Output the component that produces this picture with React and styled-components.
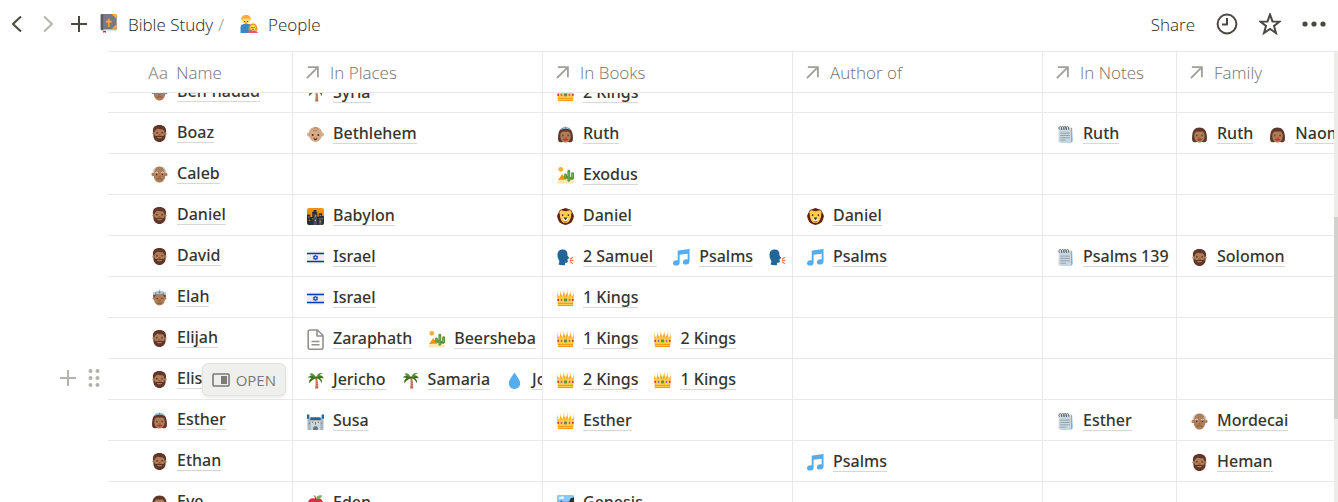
import React, { useLayoutEffect, useRef } from "react";
import styled, { createGlobalStyle, css } from "styled-components";

const HAIR = "#60352a";
const SKIN = "#af7e57";

const Woman = ({ tiara }) => (
  <>
    <path
      fill={HAIR}
      d="M18 3C9 3 4 9 3 17c-1 6-1 12 0 15 2 3 6 3 9 2h12c3 1 7 1 9-2 1-3 1-9 0-15C32 9 27 3 18 3z"
    />
    <path
      fill={SKIN}
      d="M18 12c-3 0-5-1-7 0-3 2-4 5-4 9 0 8 5 14 11 14s11-6 11-14c0-4-1-7-4-9-2-1-4 0-7 0z"
    />
    <ellipse cx="12.500" cy="20" rx="1.500" ry="2" fill={HAIR} />
    <ellipse cx="23.500" cy="20" rx="1.500" ry="2" fill={HAIR} />
    <path d="M16 24.500h4" stroke="#84502f" strokeWidth="1.500" />
    <path fill="#ee1c30" d="M12 28l4.500-1.500 1.500.6 1.500-.6L24 28c-1 4-11 4-12 0z" />
    {tiara && (
      <>
        <path
          fill="#aebcc6"
          d="M8 8l1-5 3 2 1-4 3 2 2-3 2 3 3-2 1 4 3-2 1 5c-6-3-14-3-20 0z"
        />
        <circle cx="18" cy="4" r="1.700" fill="#4289c1" />
        <circle cx="12" cy="5" r="1.200" fill="#4289c1" />
        <circle cx="24" cy="5" r="1.200" fill="#4289c1" />
      </>
    )}
  </>
);

const drawings = {
  beard: (
    <>
      <path
        fill={HAIR}
        d="M18 0C8 0 4 5 4 12c0 4 1 7 1 10 0 8 6 14 13 14s13-6 13-14c0-3 1-6 1-10C32 5 27 0 18 0z"
      />
      <circle cx="5.500" cy="18" r="2.500" fill={SKIN} />
      <circle cx="30.500" cy="18" r="2.500" fill={SKIN} />
      <path
        fill={SKIN}
        d="M8 13c2-4 5-5 8-5 4 2 8 0 10 2 2 3 3 6 2 12-3 2-5 1-10 1s-7 1-10-1c-1-4-1-7 0-9z"
      />
      <ellipse cx="12.500" cy="16.500" rx="1.700" ry="2" fill={HAIR} />
      <ellipse cx="23.500" cy="16.500" rx="1.700" ry="2" fill={HAIR} />
      <path d="M16 20.500h4" stroke="#84502f" strokeWidth="1.800" />
      <path fill={SKIN} d="M12 26c3-1 9-1 12 0-2 3-10 3-12 0z" />
    </>
  ),
  elder: (
    <>
      <path fill="#c8ccd0" d="M4 17C1 8 8 1 18 1s17 7 14 16l-3 2H7z" />
      <path
        fill={SKIN}
        d="M18 1c7 0 11 6 11 14l1 6c0 7-5 14-12 14S6 28 6 21l1-6C7 7 11 1 18 1z"
      />
      <circle cx="4.500" cy="18" r="3.500" fill={SKIN} />
      <circle cx="31.500" cy="18" r="3.500" fill={SKIN} />
      <path
        d="M9 14.500c2-2 4-2 6 0M21 14.500c2-2 4-2 6 0"
        fill="none"
        stroke="#dfe1e2"
        strokeWidth="2"
      />
      <circle cx="12" cy="18" r="1.600" fill={HAIR} />
      <circle cx="24" cy="18" r="1.600" fill={HAIR} />
      <path
        d="M16 23h4M12 28c4-1 8-1 12 0"
        fill="none"
        stroke="#7c4b2d"
        strokeWidth="1.600"
      />
    </>
  ),
  prince: (
    <>
      <path fill={HAIR} d="M5 18C3 9 8 6 18 6s15 3 13 12l-3 2H8z" />
      <ellipse cx="18" cy="22" rx="11.500" ry="13" fill={SKIN} />
      <circle cx="6" cy="20" r="2.500" fill={SKIN} />
      <circle cx="30" cy="20" r="2.500" fill={SKIN} />
      <path
        fill="#b6c5ce"
        d="M5 13l-1-7 5 2 2-5 4 2 3-5 3 5 4-2 2 5 5-2-1 7c-8-3-18-3-26 0z"
      />
      <circle cx="18" cy="7" r="2.200" fill="#4289c1" />
      <circle cx="10" cy="9" r="1.500" fill="#4289c1" />
      <circle cx="26" cy="9" r="1.500" fill="#4289c1" />
      <circle cx="13" cy="20" r="1.600" fill={HAIR} />
      <circle cx="23" cy="20" r="1.600" fill={HAIR} />
      <path d="M16 25h4M13 30h10" stroke="#7c4b2d" strokeWidth="1.600" />
    </>
  ),
  princess: <Woman tiara />,
  woman: <Woman />,
  baby: (
    <>
      <path
        fill="#d4ab88"
        d="M18 2c8 0 13 5 14 12 2 0 4 2 4 4s-2 5-5 5c-2 7-7 11-13 11S7 30 5 23c-3 0-5-3-5-5s2-4 4-4C5 7 10 2 18 2z"
      />
      <path
        d="M12 8c4 4 11 2 10-2-1-4-8-3-6 0"
        fill="none"
        stroke="#a57853"
        strokeWidth="1.700"
      />
      <circle cx="12" cy="19" r="2" fill="#662113" />
      <circle cx="24" cy="19" r="2" fill="#662113" />
      <path fill="#662113" d="M14 25h8c0 7-8 7-8 0z" />
      <path fill="#fff" d="M16 25h4v1.600h-4z" />
    </>
  ),
  palm: (
    <>
      <path
        fill="#c1694f"
        d="M17 12l4-1c2 8 3 16 3 24h-7c2-8 2-16 0-23z"
      />
      <path
        d="M18 19h4M18 24h5M18 29h5"
        stroke="#e0997f"
        strokeWidth="1.500"
      />
      <path
        fill="#3e721d"
        d="M18 10C14 5 6 6 1 13c5-2 7-1 8 0-4 2-5 6-4 11 5-7 9-9 14-11 6 1 10 4 12 11 2-5 0-9-3-11 3-1 5 0 8 1-3-7-10-9-14-5z"
      />
      <path
        fill="#5c913b"
        d="M19 11C14 3 10 1 5 4c3 1 5 3 6 5zM20 11c1-7 7-11 13-8-5 1-6 3-7 7z"
      />
    </>
  ),
  city: (
    <>
      <rect width="36" height="36" rx="4" fill="#f4900c" />
      <path
        fill="#292f33"
        d="M0 14h7v5h4V8h3V4h6v5h2v9h3v-7h7v6h4v15c0 2-2 4-4 4H4c-2 0-4-2-4-4z"
      />
      <path fill="#4b545d" d="M14 13h7v23h-7zM25 20h6v16h-6z" />
      <path
        fill="#ffcc4d"
        d="M3 18h2v2H3zM4 25h2v2H4zM11 22h2v2h-2zM17 16h2v2h-2zM17 25h2v2h-2zM27 15h2v2h-2zM32 22h2v2h-2zM27 28h2v2h-2z"
      />
    </>
  ),
  israel: (
    <>
      <rect y="5" width="36" height="26" rx="4" fill="#eee" />
      <path fill="#0038b8" d="M0 8h36v3H0zM0 25h36v3H0z" />
      <path
        d="M18 12.500l4.800 8.200h-9.600zM18 23.500l4.800-8.200h-9.600z"
        fill="none"
        stroke="#0038b8"
        strokeWidth="1.600"
      />
    </>
  ),
  drop: (
    <path fill="#55acee" d="M18 1c4 7 12 15 12 23 0 7-5 12-12 12S6 31 6 24C6 16 14 8 18 1z" />
  ),
  castle: (
    <>
      <path fill="#aab8c2" d="M1 11h34v25H1z" />
      <path fill="#ccd6dd" d="M8 17h20v19H8z" />
      <path
        fill="#226699"
        d="M0 3h5v9H0zM31 3h5v9h-5zM7 9h22v6H7z"
      />
      <path fill="#66757f" d="M17 19h2v6h-2zM13 36v-4c0-5 10-5 10 0v4z" />
      <path fill="#67757f" d="M11 18h2v3h-2zM23 18h2v3h-2zM4 20h2v3H4zM30 20h2v3h-2z" />
    </>
  ),
  apple: (
    <>
      <path
        fill="#dd2e44"
        d="M24 7c-3 0-4 1-6 1s-3-1-6-1C6 7 2 12 2 19c0 9 6 17 11 17 2 0 3-1 5-1s3 1 5 1c5 0 11-8 11-17 0-7-4-12-10-12z"
      />
      <path d="M18 9c0-4-1-6-3-8" stroke="#662113" strokeWidth="2" fill="none" />
      <path fill="#77b255" d="M19 7c2-6 7-7 13-6-2 6-7 8-13 6z" />
    </>
  ),
  crown: (
    <>
      <path
        fill="#ffac33"
        d="M2 34L0 6l5 10 2-12 5 11 2-13 4 11 4-11 2 13 5-11 2 12 5-10-2 28z"
      />
      <path fill="#ffcc4d" d="M3 17l3-6 3 6 3-7 4 7 2-9 2 9 4-7 3 7 3-6 3 6v16H3z" />
      <path d="M2 28.500h32M2 33h32" stroke="#f4900c" strokeWidth="1.800" />
      <path fill="#5c913b" d="M15 18h6v6h-6z" />
      <path fill="#9266cc" d="M9.500 18l2.500 3-2.500 3L7 21zM26.500 18l2.500 3-2.500 3-2.500-3z" />
      <path fill="#be1931" d="M1 19h3v4H1zM32 19h3v4h-3z" />
      <g fill="#ffe39a">
        <circle cx="1.500" cy="4" r="1.500" />
        <circle cx="7.500" cy="3" r="1.500" />
        <circle cx="14" cy="2" r="1.500" />
        <circle cx="22" cy="2" r="1.500" />
        <circle cx="28.500" cy="3" r="1.500" />
        <circle cx="34.500" cy="4" r="1.500" />
      </g>
    </>
  ),
  desert: (
    <>
      <circle cx="8" cy="5" r="5" fill="#ffac33" />
      <path fill="#f4900c" d="M2 28l9-13 10 13z" />
      <path fill="#ffe8b6" d="M0 31c3-5 10-4 18-4 10 0 16 0 18 4 1 4-3 4-7 4H4c-3 0-5-1-4-4z" />
      <path
        d="M25 28V9M25 22h-7v-5M25 24h8V14"
        fill="none"
        stroke="#5c913b"
        strokeWidth="6"
        strokeLinecap="round"
        strokeLinejoin="round"
      />
      <path d="M25 28V10M18 17v5M33 15v8" stroke="#77b255" strokeWidth="2" />
    </>
  ),
  lion: (
    <>
      <path
        fill="#662113"
        d="M18 0l6 2 6 2 3 6 3 7-2 7-3 6-6 4-7 2-7-2-6-4-3-6-2-7 3-7 3-6 6-2z"
      />
      <path
        fill="#ffcc4d"
        d="M9 5c4 0 5 2 9 2s5-2 9-2c4 1 5 5 3 8 0 9-4 19-12 19S6 22 6 13C4 10 5 6 9 5z"
      />
      <path fill="#ffe8b6" d="M12 22l6-4 6 4c1 10-13 10-12 0z" />
      <path fill="#292f33" d="M14 20h8l-3 5h-2z" />
      <circle cx="12" cy="15" r="1.800" fill="#292f33" />
      <circle cx="24" cy="15" r="1.800" fill="#292f33" />
      <path d="M14 28c2 2 6 2 8 0" stroke="#662113" strokeWidth="1.600" fill="none" />
    </>
  ),
  speaking: (
    <>
      <path
        fill="#226699"
        d="M12 1C4 1 1 6 1 13c0 6 3 9 4 13 0 3-1 5-2 7 5 2 10 2 14 1v-5c3 1 6 0 6-3l-1-4 4-3-4-5C23 6 20 1 12 1z"
      />
      <path
        d="M28 21l5-3M28 24h6M28 27l5 4"
        stroke="#f4794f"
        strokeWidth="2.400"
        strokeLinecap="round"
      />
    </>
  ),
  music: (
    <path
      fill="#55acee"
      d="M34 0L12 3c-1 0-2 1-2 2v19c-6-1-10 2-10 6s3 5 7 5 7-2 7-6V12l17-2v12c-6-1-10 2-10 6s3 5 7 5 7-3 7-6V1c0-1 0-1-1-1z"
    />
  ),
  note: (
    <>
      <path fill="#5dadec" d="M28 4h4l1 28c0 2-2 3-4 3H8z" />
      <path fill="#ccd6dd" d="M4 3h26v29c0 2-1 3-3 3H6c-2 0-3-1-3-3z" />
      <path d="M7 15h20M7 20h20M7 25h20M7 30h12" stroke="#8899a6" strokeWidth="1.800" />
      <path
        d="M5 8c-3-6 2-9 4-6l1 6c-2-6 2-9 4-6l1 6c-2-6 2-9 4-6l1 6c-2-6 2-9 4-6l1 6"
        fill="none"
        stroke="#4f5b64"
        strokeWidth="1.800"
      />
    </>
  ),
  park: (
    <>
      <rect width="36" height="36" rx="4" fill="#55acee" />
      <path fill="#88c9f9" d="M0 4c0-3 2-4 4-4h28c2 0 4 1 4 4v10H0z" />
      <path fill="#fff" d="M4 8c-1-4 3-5 4-3 2-5 8-2 7 3z" />
      <path fill="#292f33" d="M36 5v27c0 2-2 4-4 4H12l7-18 7-5 3-6z" />
      <path fill="#3e721d" d="M0 20l5-3 4-6 5 8 4 3-6 14H4c-2 0-4-2-4-4z" />
      <path fill="#66757f" d="M21 20l7-7 1 4-6 8z" />
    </>
  ),
  bible: (
    <>
      <path fill="#be1931" d="M8 30h5v6l-3-2-2 2z" />
      <path fill="#5c5b66" d="M6 0h24c2 0 3 1 3 3v28H6c-2 0-3-1-3-3V3c0-2 1-3 3-3z" />
      <path fill="#777987" d="M8 0h22c2 0 3 1 3 3v25H8z" />
      <path fill="#e1e8ed" d="M8 29h24v3H8z" />
      <path fill="#ffac33" d="M24 0h6c2 0 3 1 3 3v6zM33 20v8h-9z" />
      <path fill="#ffac33" d="M17 9h3v4h4v3h-4v8h-3v-8h-4v-3h4z" />
    </>
  ),
  family: (
    <>
      <path fill="#3b88c3" d="M1 36V25c0-5 3-7 8-7h7c5 0 8 2 8 7v11z" />
      <circle cx="12" cy="10" r="8" fill="#ffdc5d" />
      <path fill="#ffac33" d="M3 11C1 4 6 0 12 0c7 0 11 4 9 11-2-2-2-5-6-5-3 2-7 1-9 1z" />
      <path fill="#f4900c" d="M17 31c0-9 3-14 9-14s9 5 9 14z" />
      <circle cx="26" cy="25" r="5.500" fill="#ffdc5d" />
      <path fill="#ea596e" d="M16 36c1-4 5-5 10-5s9 1 10 5z" />
      <path d="M9 12v2M15 12v2M24 24v2M28 24v2" stroke="#662113" strokeWidth="1.800" />
      <path d="M10 16h4M24 28.500h4" stroke="#df1f32" strokeWidth="1.500" />
    </>
  ),
};

const Emoji = ({ name, size = 17 }) => (
  <EmojiSvg viewBox="0 0 36 36" width={size} height={size} aria-hidden="true">
    {drawings[name]}
  </EmojiSvg>
);

const BlankPage = () => (
  <EmojiSvg viewBox="0 0 17 21" width="17" height="21" aria-hidden="true">
    <path
      d="M3 1h7.500L16 6.500V18.500c0 1-.7 1.700-1.700 1.700H3c-1 0-1.800-.7-1.800-1.700V2.800C1.200 1.700 2 1 3 1zM10 1v6h6M4.500 12.500h8M4.500 15.800h8"
      fill="none"
      stroke="#91918e"
      strokeWidth="1.600"
      strokeLinejoin="round"
    />
  </EmojiSvg>
);

const columns = [
  { label: "Name", width: 185 },
  { label: "In Places", width: 250 },
  { label: "In Books", width: 250 },
  { label: "Author of", width: 250 },
  { label: "In Notes", width: 134 },
  { label: "Family" },
];

// name, then places / books / author / notes / family
const people = [
  { name: "Ben-hadad", icon: "elder", links: [[["palm", "Syria"]], [["crown", "2 Kings"]], [], [], []] },
  {
    name: "Boaz",
    icon: "beard",
    links: [
      [["baby", "Bethlehem"]],
      [["princess", "Ruth"]],
      [],
      [["note", "Ruth"]],
      [["woman", "Ruth"], ["woman", "Naomi"]],
    ],
  },
  { name: "Caleb", icon: "elder", links: [[], [["desert", "Exodus"]], [], [], []] },
  {
    name: "Daniel",
    icon: "beard",
    links: [[["city", "Babylon"]], [["lion", "Daniel"]], [["lion", "Daniel"]], [], []],
  },
  {
    name: "David",
    icon: "beard",
    links: [
      [["israel", "Israel"]],
      [["speaking", "2 Samuel\u00a0"], ["music", "Psalms"], ["speaking", "1 Samuel"]],
      [["music", "Psalms"]],
      [["note", "Psalms 139"]],
      [["beard", "Solomon"]],
    ],
  },
  { name: "Elah", icon: "prince", links: [[["israel", "Israel"]], [["crown", "1 Kings"]], [], [], []] },
  {
    name: "Elijah",
    icon: "beard",
    links: [
      [["page", "Zaraphath"], ["desert", "Beersheba"]],
      [["crown", "1 Kings"], ["crown", "2 Kings"]],
      [],
      [],
      [],
    ],
  },
  {
    name: "Elisha",
    icon: "beard",
    hovered: true,
    links: [
      [["palm", "Jericho"], ["palm", "Samaria"], ["drop", "Jordan"]],
      [["crown", "2 Kings"], ["crown", "1 Kings"]],
      [],
      [],
      [],
    ],
  },
  {
    name: "Esther",
    icon: "princess",
    links: [
      [["castle", "Susa"]],
      [["crown", "Esther"]],
      [],
      [["note", "Esther"]],
      [["elder", "Mordecai"]],
    ],
  },
  { name: "Ethan", icon: "beard", links: [[], [], [["music", "Psalms"]], [], [["beard", "Heman"]]] },
  { name: "Eve", icon: "woman", links: [[["apple", "Eden"]], [["park", "Genesis"]], [], [], []] },
];

export default function App() {
  const scroller = useRef(null);

  useLayoutEffect(() => {
    scroller.current.scrollTop = 21;
  }, []);

  return (
    <Page>
      <GlobalStyle />
      <Toolbar>
        <NavButtons>
          <IconButton aria-label="Back">
            <svg width="12" height="18" viewBox="0 0 12 18">
              <path d="M10 1.500L2 9l8 7.500" />
            </svg>
          </IconButton>
          <IconButton aria-label="Forward" $muted>
            <svg width="12" height="18" viewBox="0 0 12 18">
              <path d="M2 1.500L10 9l-8 7.500" />
            </svg>
          </IconButton>
          <IconButton aria-label="New page">
            <svg width="18" height="18" viewBox="0 0 18 18">
              <path d="M9 1v16M1 9h16" />
            </svg>
          </IconButton>
        </NavButtons>
        <Breadcrumb>
          <Crumb href="#bible-study">
            <Emoji name="bible" size={19} />
            <span>Bible Study</span>
          </Crumb>
          <Slash>/</Slash>
          <Crumb href="#people">
            <Emoji name="family" size={18} />
            <span>People</span>
          </Crumb>
        </Breadcrumb>
        <Actions>
          <ShareButton>Share</ShareButton>
          <IconButton aria-label="Updates">
            <svg width="22" height="22" viewBox="0 0 22 22">
              <circle cx="11" cy="11" r="9.400" />
              <path d="M11 5v6.500H6" />
            </svg>
          </IconButton>
          <IconButton aria-label="Favorite">
            <svg width="22" height="22" viewBox="0 0 22 22">
              <path
                strokeLinejoin="miter"
                d="M11 1.500l2.500 6.900 7.200.2-5.700 4.400 2 7-6-4.100L5 20l2-7-5.700-4.400 7.200-.2z"
              />
            </svg>
          </IconButton>
          <IconButton aria-label="More" $filled>
            <svg width="24" height="22" viewBox="0 0 24 22">
              <circle cx="3" cy="11" r="2.600" />
              <circle cx="12" cy="11" r="2.600" />
              <circle cx="21" cy="11" r="2.600" />
            </svg>
          </IconButton>
        </Actions>
      </Toolbar>

      <Main>
        <Scroller ref={scroller}>
          <Table>
            <colgroup>
              <GutterCol />
              {columns.map((c) => (
                <Col key={c.label} $width={c.width} />
              ))}
            </colgroup>
            <thead>
              <tr>
                <GutterHead />
                {columns.map((c, i) => (
                  <HeadCell key={c.label} scope="col">
                    <HeadInner $first={i === 0}>
                      {i === 0 ? (
                        <TypeGlyph>Aa</TypeGlyph>
                      ) : (
                        <svg width="13" height="13" viewBox="0 0 14 14">
                          <path d="M1 13L12.500 1.500M2 1.200h10.800V12" />
                        </svg>
                      )}
                      {c.label}
                    </HeadInner>
                  </HeadCell>
                ))}
              </tr>
            </thead>
            <tbody>
              {people.map((p) => (
                <tr key={p.name}>
                  <GutterCell>
                    {p.hovered && (
                      <RowTools>
                        <RowButton aria-label="Add row">
                          <svg width="18" height="18" viewBox="0 0 18 18">
                            <path d="M9 1v16M1 9h16" stroke="#b3b2af" strokeWidth="2" />
                          </svg>
                        </RowButton>
                        <RowButton aria-label="Drag row">
                          <svg width="12" height="20" viewBox="0 0 12 20" fill="#b3b2af">
                            {[3, 10, 17].map((y) => (
                              <React.Fragment key={y}>
                                <circle cx="2.500" cy={y} r="2" />
                                <circle cx="9.500" cy={y} r="2" />
                              </React.Fragment>
                            ))}
                          </svg>
                        </RowButton>
                      </RowTools>
                    )}
                  </GutterCell>
                  <Cell>
                    <NameInner>
                      <Emoji name={p.icon} />
                      <PageLink href={`#${p.name}`}>{p.name}</PageLink>
                    </NameInner>
                    {p.hovered && (
                      <OpenButton>
                        <svg width="18" height="14" viewBox="0 0 18 14">
                          <rect
                            x="1"
                            y="1"
                            width="16"
                            height="12"
                            rx="1"
                            fill="none"
                            stroke="#7b7a77"
                            strokeWidth="1.600"
                          />
                          <path d="M9 3h6v8H9z" fill="#7b7a77" />
                        </svg>
                        OPEN
                      </OpenButton>
                    )}
                  </Cell>
                  {p.links.map((items, i) => (
                    <Cell key={columns[i + 1].label}>
                      <RelationInner>
                        {items.map(([icon, label], n) => (
                          <Relation key={n}>
                            {icon === "page" ? <BlankPage /> : <Emoji name={icon} />}
                            <PageLink href={`#${label.trim()}`}>{label}</PageLink>
                          </Relation>
                        ))}
                      </RelationInner>
                    </Cell>
                  ))}
                </tr>
              ))}
            </tbody>
          </Table>
        </Scroller>
        <ScrollTrack>
          <ScrollThumb />
        </ScrollTrack>
      </Main>
    </Page>
  );
}

const GlobalStyle = createGlobalStyle`
  * {
    box-sizing: border-box;
  }
  body {
    margin: 0;
    background: #fff;
    color: #37352f;
    font-family: "Open Sans", "Noto Sans", sans-serif;
    font-size: 16px;
  }
  button {
    font-family: inherit;
    border: none;
    background: none;
    padding: 0;
    cursor: pointer;
  }
  a {
    color: inherit;
    text-decoration: none;
  }
`;

const Page = styled.div`
  display: flex;
  flex-direction: column;
  height: 100vh;
`;

const Toolbar = styled.header`
  display: flex;
  align-items: center;
  flex: none;
  height: 51px;
  padding: 0 12px 4px 7px;
  font-size: 17px;
  font-weight: 300;
  color: #1f1e1b;
`;

const NavButtons = styled.div`
  display: flex;
  gap: 11px;
`;

const IconButton = styled.button`
  display: flex;
  align-items: center;
  justify-content: center;
  min-width: 20px;

  svg {
    fill: none;
    stroke: ${(p) => (p.$muted ? "#b5b4b1" : "#4a4843")};
    stroke-width: 2;
    stroke-linejoin: round;
    ${(p) =>
      p.$filled &&
      css`
        fill: #4a4843;
        stroke: none;
      `}
  }
`;

const Breadcrumb = styled.nav`
  display: flex;
  align-items: center;
  margin-left: 10px;
`;

const Crumb = styled.a`
  display: flex;
  align-items: center;
  gap: 10px;
  line-height: 24px;

  span {
    padding-top: 2px;
  }
`;

const Slash = styled.span`
  margin: 0 16px 0 5px;
  padding-top: 2px;
  color: #8f8e8a;
`;

const Actions = styled.div`
  display: flex;
  align-items: center;
  gap: 21px;
  margin-left: auto;
`;

const ShareButton = styled.button`
  padding-top: 2px;
  font-size: 17px;
  font-weight: 300;
  line-height: 24px;
  color: #1f1e1b;
`;

const Main = styled.main`
  display: flex;
  flex: 1;
  min-height: 0;
`;

const Scroller = styled.div`
  flex: 1;
  min-width: 0;
  overflow: hidden;
`;

const ScrollTrack = styled.div`
  display: flex;
  flex-direction: column;
  width: 4px;
  background: #edece9;

  &::before {
    content: "";
    flex: 166;
  }
  &::after {
    content: "";
    flex: 83;
  }
`;

const ScrollThumb = styled.div`
  flex: 202;
  background: #d3d1cb;
`;

const Table = styled.table`
  width: 100%;
  table-layout: fixed;
  border-collapse: separate;
  border-spacing: 0;
`;

const GutterCol = styled.col`
  width: 108px;
`;

const Col = styled.col`
  width: ${(p) => (p.$width ? `${p.$width}px` : "auto")};
`;

const GutterHead = styled.td`
  position: sticky;
  top: 0;
  z-index: 2;
  padding: 0;
  background: #fff;
`;

const HeadCell = styled.th`
  position: sticky;
  top: 0;
  z-index: 2;
  padding: 0;
  background: #fff;
  border-top: 1px solid #e9e9e7;
  border-bottom: 1px solid #e9e9e7;
  border-right: 1px solid #e9e9e7;
  font-weight: 300;
  text-align: left;

  &:last-child {
    border-right: none;
  }
`;

const HeadInner = styled.div`
  display: flex;
  align-items: center;
  gap: ${(p) => (p.$first ? "8px" : "11px")};
  height: 40px;
  padding-left: ${(p) => (p.$first ? "40px" : "13px")};
  font-size: 17px;
  color: #73726e;

  svg {
    fill: none;
    stroke: #a09f9b;
    stroke-width: 2;
  }
`;

const TypeGlyph = styled.span`
  font-size: 17px;
  font-weight: 400;
  color: #a09f9b;
`;

const GutterCell = styled.td`
  padding: 0;
`;

const RowTools = styled.div`
  display: flex;
  align-items: center;
  justify-content: flex-end;
  gap: 11px;
  padding: 0 8px 3px 0;
`;

const RowButton = styled.button`
  display: flex;
`;

const Cell = styled.td`
  position: relative;
  padding: 0;
  border-bottom: 1px solid #e9e9e7;
  border-right: 1px solid #e9e9e7;

  &:last-child {
    border-right: none;
  }
`;

const NameInner = styled.div`
  display: flex;
  align-items: center;
  gap: 9px;
  height: 40px;
  padding-left: 43px;
`;

const RelationInner = styled.div`
  display: flex;
  align-items: center;
  gap: 16px;
  height: 40px;
  padding: 2px 0 0 14px;
  overflow: hidden;
`;

const Relation = styled.div`
  display: flex;
  align-items: center;
  flex: none;
  gap: 9px;
`;

const EmojiSvg = styled.svg`
  flex: none;
`;

const PageLink = styled.a`
  border-bottom: 1px solid #d8d7d4;
  font-family: "Noto Sans", "Open Sans", sans-serif;
  font-weight: 500;
  line-height: 19px;
  white-space: nowrap;
`;

const OpenButton = styled.button`
  position: absolute;
  top: 5px;
  right: 7px;
  display: flex;
  align-items: center;
  gap: 6px;
  height: 31px;
  padding: 0 9px;
  border-radius: 5px;
  background: #efefee;
  box-shadow: 0 0 0 1px #e2e2e0, 0 2px 4px rgba(15, 15, 15, 0.12);
  font-size: 15px;
  font-weight: 500;
  color: #7b7a77;
`;
